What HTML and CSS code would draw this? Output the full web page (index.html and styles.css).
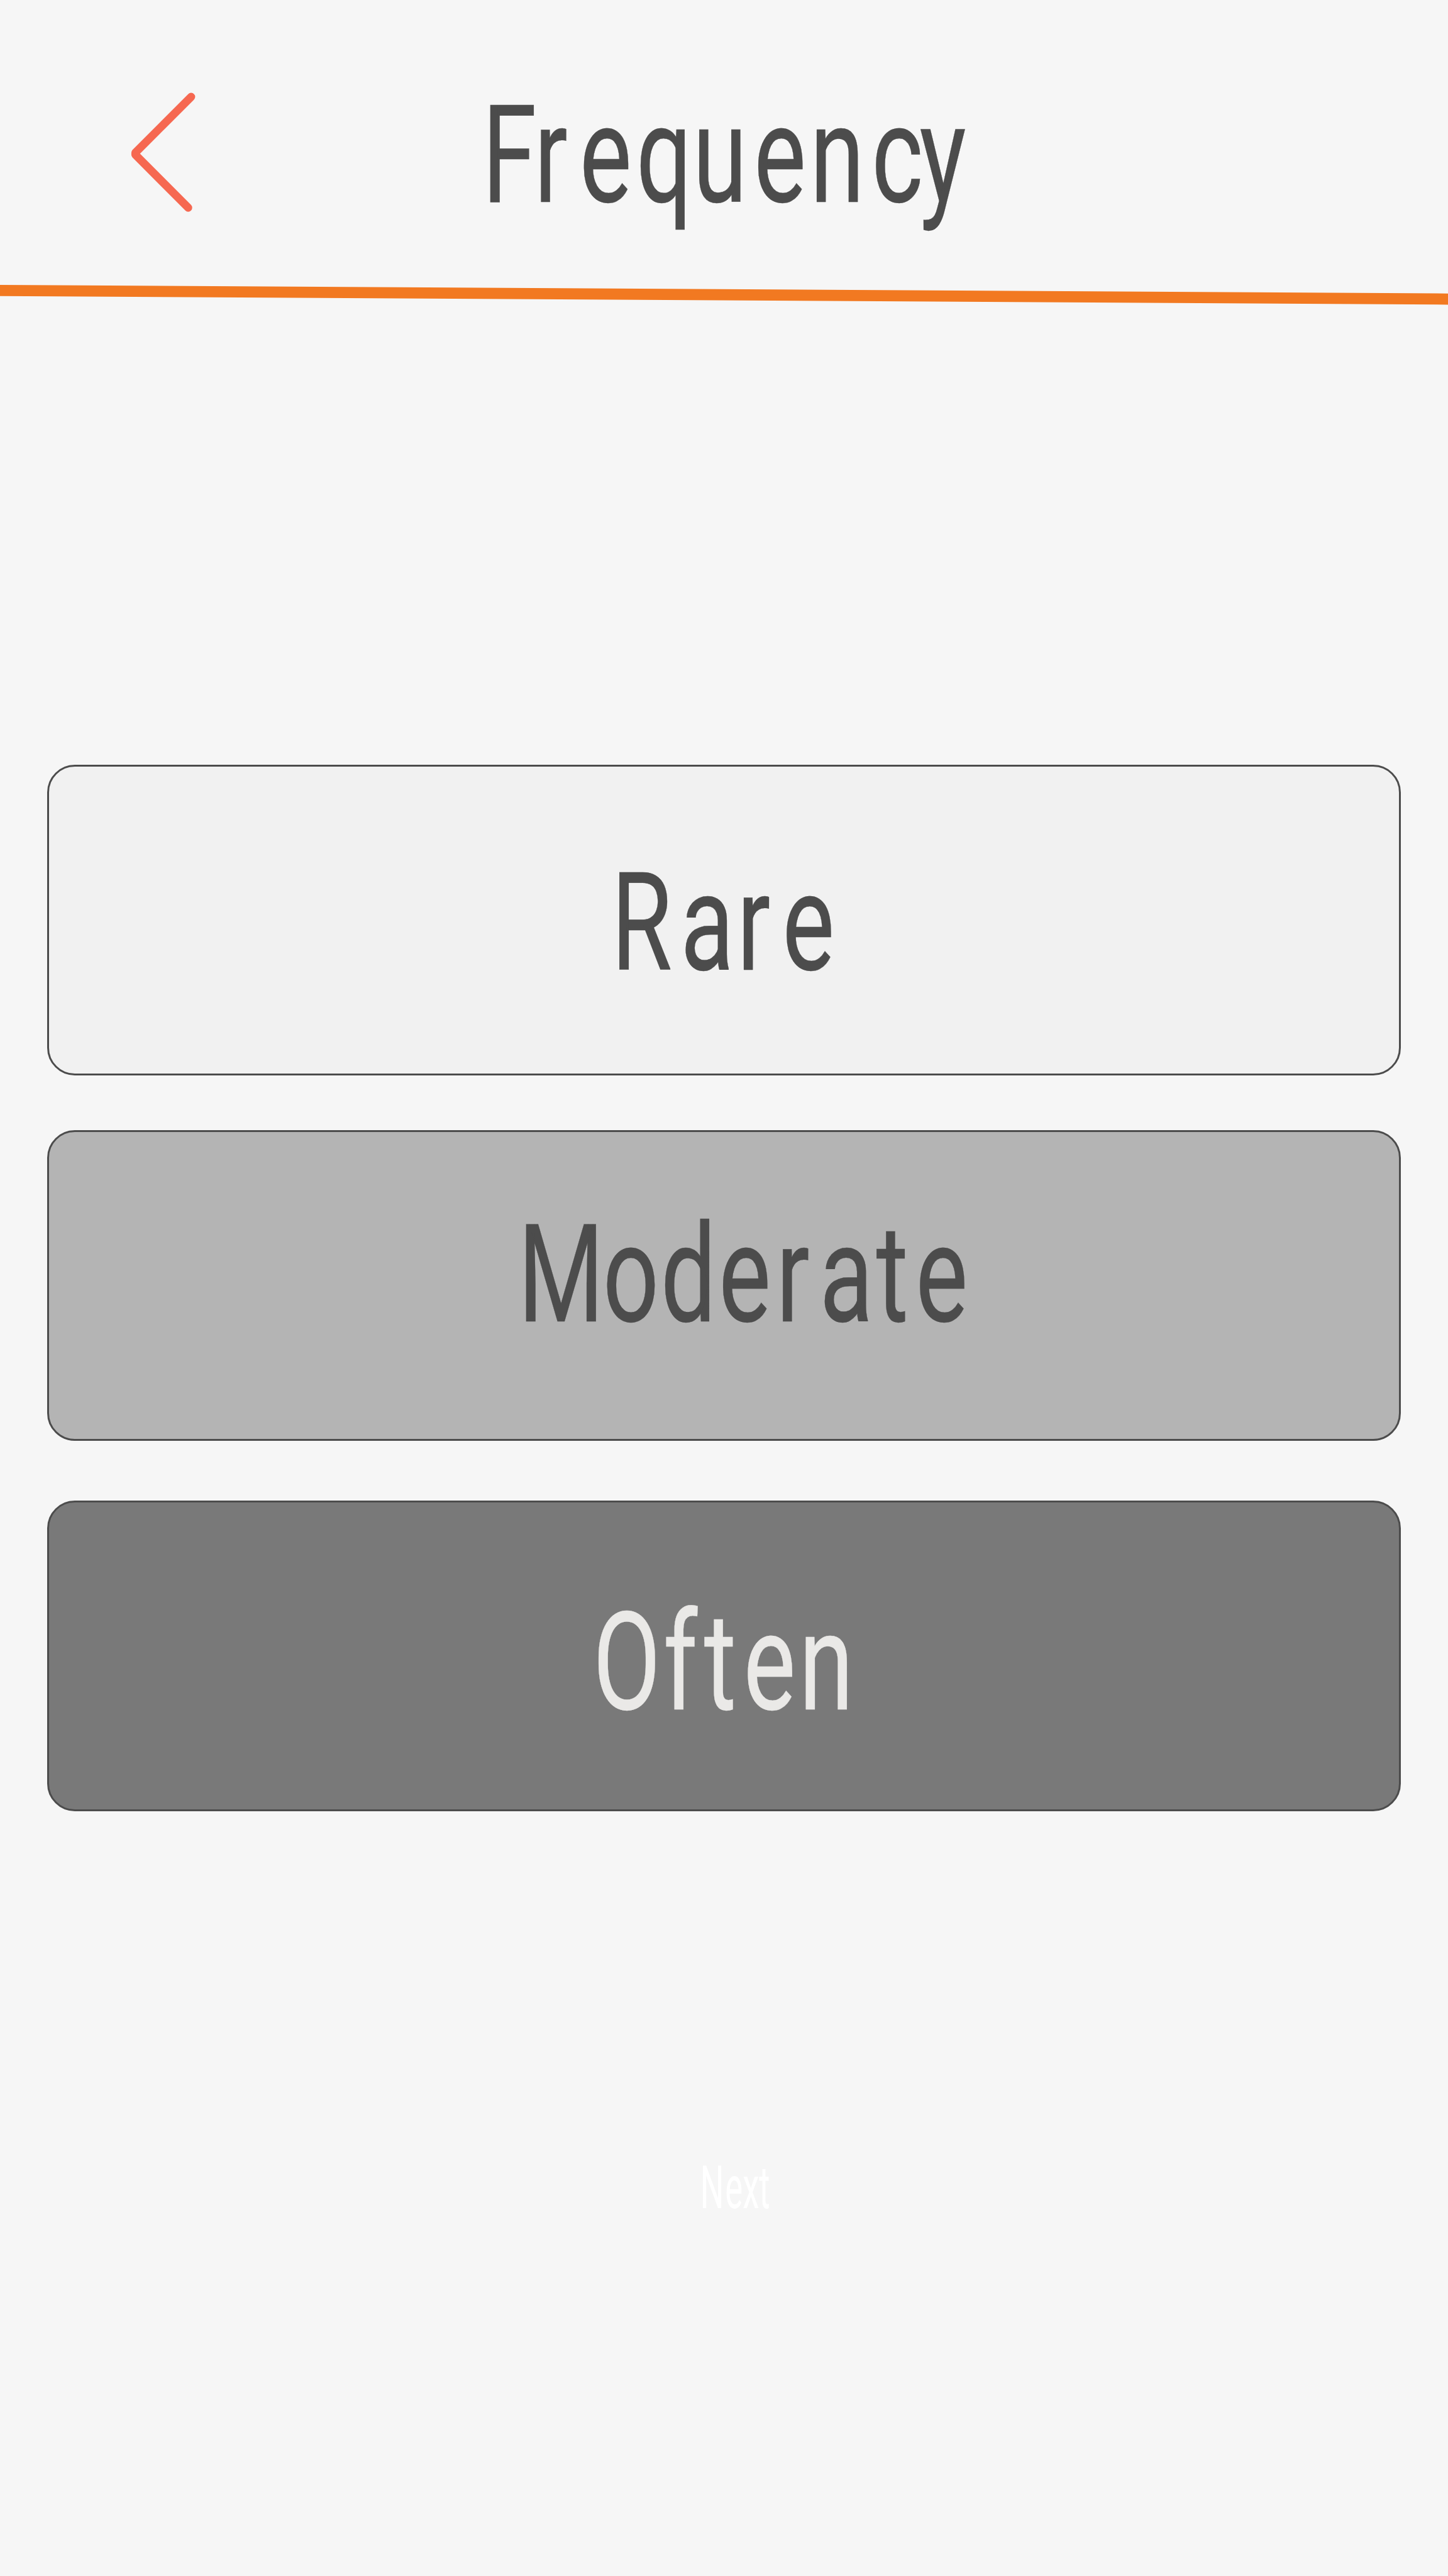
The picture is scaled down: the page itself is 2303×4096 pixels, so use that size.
FILE: index.html
```
<!DOCTYPE html>
<html lang="en">
<head>
    <meta charset="UTF-8" />
    <meta name="viewport" content="width=device-width, initial-scale=1.0" />
    <title>Frequency</title>
    <link rel="stylesheet" href="styles.css">
</head>
<body>
    <header class="header">
        <svg class="back" viewBox="0 0 110 200">
            <path d="M96 12 L7.3 100.8 V104 L91.3 188.3" />
        </svg>
        <svg class="word title" width="757" height="155">
            <text transform="scale(.72 1)" x="-18 97 197 322 447 582 706 842 948" y="155">Frequency</text>
        </svg>
    </header>
    <svg class="divider" viewBox="0 0 2303 40">
        <line x1="-10" y1="11.9" x2="2313" y2="25.6" />
    </svg>

    <main class="options">
        <div class="option rare">
            <svg class="word" width="337" height="155">
                <text transform="scale(.72 1)" x="-15 138 263 363" y="155">Rare</text>
            </svg>
        </div>
        <div class="option moderate">
            <svg class="word" width="696" height="155">
                <text transform="scale(.72 1)" x="-18 169 297 425 552 648 773 860" y="155">Moderate</text>
            </svg>
        </div>
        <div class="option often">
            <svg class="word" width="399" height="155">
                <text transform="scale(.72 1)" x="-12.6 143 233 320 443" y="155">Often</text>
            </svg>
        </div>
    </main>

    <footer class="footer">
        <svg class="word next" width="107" height="67">
            <text transform="scale(.56 1)" x="-7.7 63 113 159.5" y="67">Next</text>
        </svg>
    </footer>
</body>
</html>
```

FILE: styles.css
```
* {
    margin: 0;
    padding: 0;
    box-sizing: border-box;
}

body {
    font-family: Roboto, "Liberation Sans", sans-serif;
    background: #f6f6f6;
    color: #4c4c4c;
    height: 4096px;
    overflow: hidden;
}

svg {
    display: block;
    flex: none;
}

/* Condensed lettering */
.word {
    overflow: visible;
    font-size: 217.6px;
    font-variant-ligatures: none;
    fill: currentColor;
    stroke: currentColor;
    stroke-width: 0.4px;
}

/* Header */
.header {
    display: flex;
    align-items: flex-start;
    height: 450px;
    padding: 142px 0 0 208px;
}

.back {
    width: 110px;
    height: 200px;
    fill: none;
    stroke: #f66851;
    stroke-width: 12.8px;
    stroke-linecap: round;
    stroke-linejoin: round;
}

.title {
    margin: 23.5px 0 0 461.6px;
}

.divider {
    width: 100%;
    height: 40px;
    stroke: #f27921;
    stroke-width: 17.7px;
}

/* Options */
.options {
    padding: 725.6px 75.4px 0;
}

.option {
    display: flex;
    justify-content: center;
    height: 494px;
    padding-top: 168px;
    margin-bottom: 87px;
    border: 3.2px solid #4c4c4c;
    border-radius: 44px;
}

.rare {
    background: #f1f1f1;
}

.moderate {
    background: #b4b4b4;
    padding: 146px 0 0 66px;
    margin-bottom: 95px;
}

.often {
    background: #797979;
    padding-top: 174px;
}

.often .word {
    color: #eae9e7;
}

/* Footer */
.footer {
    display: flex;
    padding: 477px 0 0 1117.6px;
}

.next {
    color: #fff;
    font-size: 94.3px;
    stroke-width: 0;
}
```
